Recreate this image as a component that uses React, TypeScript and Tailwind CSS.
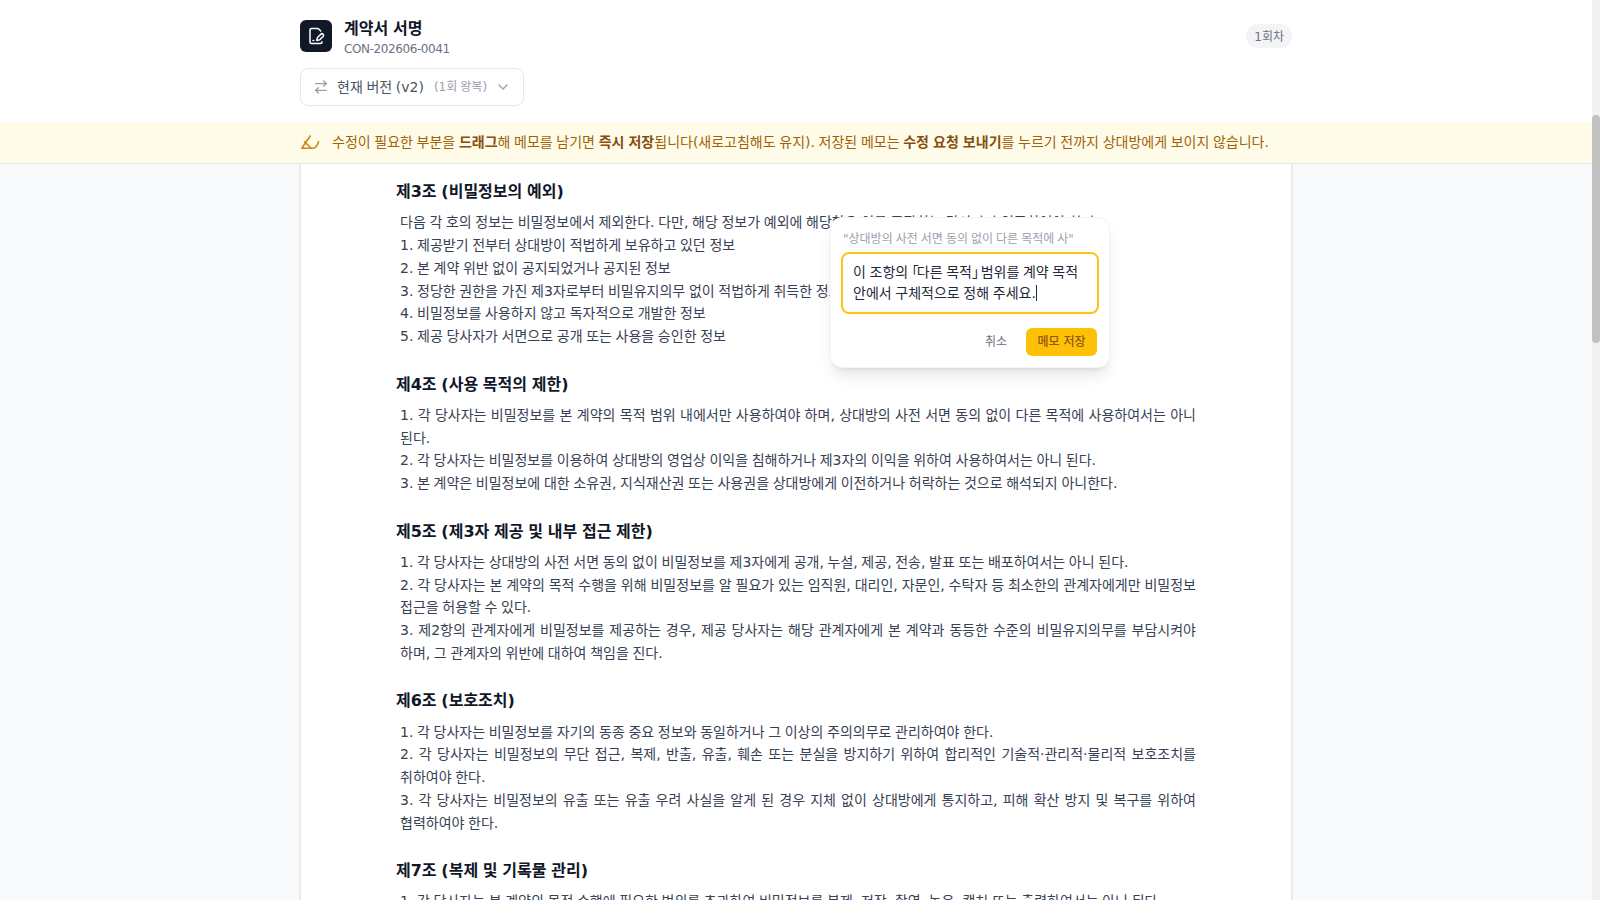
import { ArrowRightLeft, ChevronDown, FilePenLine } from "lucide-react";

const sections = [
  {
    title: "제3조 (비밀정보의 예외)",
    lines: [
      "다음 각 호의 정보는 비밀정보에서 제외한다. 다만, 해당 정보가 예외에 해당함은 이를 주장하는 당사자가 입증하여야 한다.",
      "1. 제공받기 전부터 상대방이 적법하게 보유하고 있던 정보",
      "2. 본 계약 위반 없이 공지되었거나 공지된 정보",
      "3. 정당한 권한을 가진 제3자로부터 비밀유지의무 없이 적법하게 취득한 정보",
      "4. 비밀정보를 사용하지 않고 독자적으로 개발한 정보",
      "5. 제공 당사자가 서면으로 공개 또는 사용을 승인한 정보",
    ],
  },
  {
    title: "제4조 (사용 목적의 제한)",
    lines: [
      "1. 각 당사자는 비밀정보를 본 계약의 목적 범위 내에서만 사용하여야 하며, 상대방의 사전 서면 동의 없이 다른 목적에 사용하여서는 아니 된다.",
      "2. 각 당사자는 비밀정보를 이용하여 상대방의 영업상 이익을 침해하거나 제3자의 이익을 위하여 사용하여서는 아니 된다.",
      "3. 본 계약은 비밀정보에 대한 소유권, 지식재산권 또는 사용권을 상대방에게 이전하거나 허락하는 것으로 해석되지 아니한다.",
    ],
  },
  {
    title: "제5조 (제3자 제공 및 내부 접근 제한)",
    lines: [
      "1. 각 당사자는 상대방의 사전 서면 동의 없이 비밀정보를 제3자에게 공개, 누설, 제공, 전송, 발표 또는 배포하여서는 아니 된다.",
      "2. 각 당사자는 본 계약의 목적 수행을 위해 비밀정보를 알 필요가 있는 임직원, 대리인, 자문인, 수탁자 등 최소한의 관계자에게만 비밀정보 접근을 허용할 수 있다.",
      "3. 제2항의 관계자에게 비밀정보를 제공하는 경우, 제공 당사자는 해당 관계자에게 본 계약과 동등한 수준의 비밀유지의무를 부담시켜야 하며, 그 관계자의 위반에 대하여 책임을 진다.",
    ],
  },
  {
    title: "제6조 (보호조치)",
    lines: [
      "1. 각 당사자는 비밀정보를 자기의 동종 중요 정보와 동일하거나 그 이상의 주의의무로 관리하여야 한다.",
      "2. 각 당사자는 비밀정보의 무단 접근, 복제, 반출, 유출, 훼손 또는 분실을 방지하기 위하여 합리적인 기술적·관리적·물리적 보호조치를 취하여야 한다.",
      "3. 각 당사자는 비밀정보의 유출 또는 유출 우려 사실을 알게 된 경우 지체 없이 상대방에게 통지하고, 피해 확산 방지 및 복구를 위하여 협력하여야 한다.",
    ],
  },
  {
    title: "제7조 (복제 및 기록물 관리)",
    lines: [
      "1. 각 당사자는 본 계약의 목적 수행에 필요한 범위를 초과하여 비밀정보를 복제, 저장, 촬영, 녹음, 캡처 또는 출력하여서는 아니 된다.",
    ],
  },
];

const HighlightIcon = () => (
  <svg
    viewBox="0 0 20 16"
    className="h-4 w-5 shrink-0 text-[#c98a12]"
    fill="none"
    stroke="currentColor"
    strokeWidth="1.6"
    strokeLinecap="round"
    strokeLinejoin="round"
  >
    <path d="M10.2 1 1.8 13.3h11c2.4 0 4.4-2.4 5.7-6.6" />
    <path d="M4.5 6.7l6.7 6.6" />
  </svg>
);

const MemoPopover = () => (
  <div className="absolute left-[830px] top-[53px] z-10 w-[280px] rounded-xl border border-gray-100 bg-white px-2.5 pt-[11px] pb-[11px] shadow-lg">
    <p className="truncate px-0.5 text-xs leading-5 text-gray-400">
      "상대방의 사전 서면 동의 없이 다른 목적에 사"
    </p>
    <div className="mt-[3px] h-[62px] rounded-lg border-2 border-[#fac515] px-2.5 py-2 text-sm leading-5 whitespace-nowrap text-gray-800">
      이 조항의 <span className="tracking-[-2px]">｢</span>다른 목적
      <span className="tracking-[-2px]">｣</span> 범위를 계약 목적
      <br />
      안에서 구체적으로 정해 주세요.
      <span className="inline-block h-4 w-px translate-y-[3px] bg-gray-800" />
    </div>
    <div className="mt-3.5 mr-0.5 flex items-center justify-end gap-[7px]">
      <button className="px-3 py-1.5 text-xs text-gray-500">취소</button>
      <button className="h-7 w-[71px] rounded-md bg-[#fec107] text-xs font-medium text-[#92570a]">
        메모 저장
      </button>
    </div>
  </div>
);

export default function App() {
  return (
    <div className="flex h-screen overflow-hidden bg-gray-50 font-['DejaVu_Sans','Noto_Sans_CJK_KR',sans-serif] [word-spacing:-0.05em]">
      <div className="flex min-w-0 flex-1 flex-col">
        <header className="h-[122px] shrink-0 bg-white">
          <div className="mx-auto w-[992px] pt-5">
            <div className="flex items-start justify-between">
              <div className="flex items-start gap-3">
                <div className="flex h-8 w-8 items-center justify-center rounded-md bg-[#111827] text-white">
                  <FilePenLine size={18} strokeWidth={2} />
                </div>
                <div className="-mt-px">
                  <h1 className="text-base leading-5 font-semibold text-gray-900">
                    계약서 서명
                  </h1>
                  <p className="mt-0.5 text-xs leading-4 tracking-[-0.4px] text-gray-500">
                    CON-202606-0041
                  </p>
                </div>
              </div>
              <span className="mt-1 rounded-full bg-gray-100 px-2 pt-[5px] pb-[3px] text-xs leading-4 text-gray-500">
                1회차
              </span>
            </div>
            <div className="mt-[11px] flex h-[38px] w-56 items-center rounded-lg border border-gray-200 bg-white px-3 whitespace-nowrap">
              <ArrowRightLeft size={16} className="shrink-0 text-gray-400" />
              <span className="ml-2 text-sm text-gray-600">현재 버전 (v2)</span>
              <span className="ml-2.5 text-xs text-gray-400">(1회 왕복)</span>
              <ChevronDown size={16} className="ml-auto shrink-0 text-gray-400" />
            </div>
          </div>
        </header>
        <div className="h-[42px] shrink-0 border-b border-gray-200 bg-[#fefce8]">
          <div className="mx-auto flex h-full w-[992px] items-center gap-3 text-sm text-[#a16207]">
            <HighlightIcon />
            <p className="pb-0.5">
              수정이 필요한 부분을 <b className="font-bold text-[#854d0e]">드래그</b>해 메모를 남기면{" "}
              <b className="font-bold text-[#854d0e]">즉시 저장</b>됩니다(새로고침해도 유지). 저장된 메모는{" "}
              <b className="font-bold text-[#854d0e]">수정 요청 보내기</b>를 누르기 전까지 상대방에게 보이지 않습니다.
            </p>
          </div>
        </div>
        <main className="relative min-h-0 flex-1 overflow-hidden">
          <MemoPopover />
          <article className="mx-auto h-full w-[992px] border-x border-gray-200 bg-white px-[95px] pt-4 shadow-sm">
            {sections.map((section) => (
              <section key={section.title} className="mb-[24.75px]">
                <h2 className="mb-[7.25px] text-base leading-6 font-semibold text-gray-900">
                  {section.title}
                </h2>
                <div className="pl-1 text-justify text-sm leading-[22.75px] break-keep text-gray-700">
                  {section.lines.map((line) => (
                    <p key={line}>{line}</p>
                  ))}
                </div>
              </section>
            ))}
          </article>
        </main>
      </div>
      <div className="w-2 shrink-0 bg-[#f1f1f1]">
        <div className="mt-[115px] h-[228px] rounded-full bg-[#c1c1c1]" />
      </div>
    </div>
  );
}
